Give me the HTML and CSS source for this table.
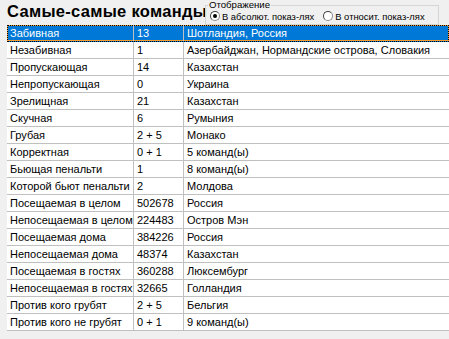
FILE: index.html
```html
<!DOCTYPE html>
<html>
<head>
<meta charset="utf-8">
<link rel="stylesheet" href="styles.css">
</head>
<body>
<div class="page">
  <div class="header">
    <h1 class="title">Самые-самые команды</h1>
    <div class="group">
      <span class="legend">Отображение</span>
      <label class="radio"><span class="dot checked"></span>В абсолют. показ-лях</label>
      <label class="radio"><span class="dot"></span>В относит. показ-лях</label>
    </div>
  </div>
  <div class="grid">
    <div class="row selected"><div class="c c1">Забивная</div><div class="c c2">13</div><div class="c c3">Шотландия, Россия</div></div>
    <div class="row"><div class="c c1">Незабивная</div><div class="c c2">1</div><div class="c c3">Азербайджан, Нормандские острова, Словакия</div></div>
    <div class="row"><div class="c c1">Пропускающая</div><div class="c c2">14</div><div class="c c3">Казахстан</div></div>
    <div class="row"><div class="c c1">Непропускающая</div><div class="c c2">0</div><div class="c c3">Украина</div></div>
    <div class="row"><div class="c c1">Зрелищная</div><div class="c c2">21</div><div class="c c3">Казахстан</div></div>
    <div class="row"><div class="c c1">Скучная</div><div class="c c2">6</div><div class="c c3">Румыния</div></div>
    <div class="row"><div class="c c1">Грубая</div><div class="c c2">2 + 5</div><div class="c c3">Монако</div></div>
    <div class="row"><div class="c c1">Корректная</div><div class="c c2">0 + 1</div><div class="c c3">5 команд(ы)</div></div>
    <div class="row"><div class="c c1">Бьющая пенальти</div><div class="c c2">1</div><div class="c c3">8 команд(ы)</div></div>
    <div class="row"><div class="c c1">Которой бьют пенальти</div><div class="c c2">2</div><div class="c c3">Молдова</div></div>
    <div class="row"><div class="c c1">Посещаемая в целом</div><div class="c c2">502678</div><div class="c c3">Россия</div></div>
    <div class="row"><div class="c c1">Непосещаемая в целом</div><div class="c c2">224483</div><div class="c c3">Остров Мэн</div></div>
    <div class="row"><div class="c c1">Посещаемая дома</div><div class="c c2">384226</div><div class="c c3">Россия</div></div>
    <div class="row"><div class="c c1">Непосещаемая дома</div><div class="c c2">48374</div><div class="c c3">Казахстан</div></div>
    <div class="row"><div class="c c1">Посещаемая в гостях</div><div class="c c2">360288</div><div class="c c3">Люксембург</div></div>
    <div class="row"><div class="c c1">Непосещаемая в гостях</div><div class="c c2">32665</div><div class="c c3">Голландия</div></div>
    <div class="row"><div class="c c1">Против кого грубят</div><div class="c c2">2 + 5</div><div class="c c3">Бельгия</div></div>
    <div class="row"><div class="c c1">Против кого не грубят</div><div class="c c2">0 + 1</div><div class="c c3">9 команд(ы)</div></div>
  </div>
</div>
</body>
</html>
```
FILE: styles.css
```css
html, body {
  margin: 0;
  padding: 0;
  background: #f0f0f0;
}
body {
  width: 449px;
  height: 339px;
  overflow: hidden;
  font-family: "Liberation Sans", Arial, sans-serif;
  font-size: 11px;
  color: #000;
}
.page {
  padding-left: 7px;
}
.header {
  display: flex;
  height: 25px;
  align-items: flex-start;
}
.title {
  margin: 2px 0 0 0;
  font-size: 16.5px;
  letter-spacing: 0.3px;
  font-weight: bold;
  line-height: 19px;
  width: 198px;
  flex: none;
  white-space: nowrap;
}
.group {
  position: relative;
  margin-top: 5px;
  padding: 0 0 0 4px;
  width: 234px;
  height: 20px;
  box-sizing: border-box;
  border: 1px solid #d5d5d5;
  display: flex;
  align-items: center;
  gap: 9px;
  font-size: 9.4px;
}
.legend {
  position: absolute;
  left: 2px;
  top: -7px;
  padding: 0 1px;
  background: #f0f0f0;
  font-size: 9.6px;
  line-height: 11px;
}
.radio {
  display: flex;
  align-items: center;
  gap: 2px;
  white-space: nowrap;
  margin-top: 2px;
}
.dot {
  width: 10px;
  height: 10px;
  box-sizing: border-box;
  border: 1px solid #8a8a8a;
  border-left-color: #404040;
  border-top-color: #404040;
  border-radius: 50%;
  background: #fff;
  position: relative;
  flex: none;
}
.dot.checked::after {
  content: "";
  position: absolute;
  left: 2px;
  top: 2px;
  width: 4px;
  height: 4px;
  border-radius: 50%;
  background: #000;
}
.grid {
  background: #fff;
}
.row {
  display: grid;
  grid-template-columns: 127px 50px 1fr;
  height: 17px;
  box-sizing: border-box;
  border-bottom: 1px solid #c0c0c0;
}
.c {
  line-height: 16px;
  white-space: nowrap;
  overflow: hidden;
  border-right: 1px solid #c0c0c0;
  padding-left: 3px;
}
.c3 {
  border-right: none;
}
.row.selected {
  background: #0078d7;
  color: #fff;
  outline: 1px dotted #000;
  outline-offset: -1px;
  box-shadow: inset 0 0 0 1px #f0a030;
  border-bottom-color: transparent;
}
```
